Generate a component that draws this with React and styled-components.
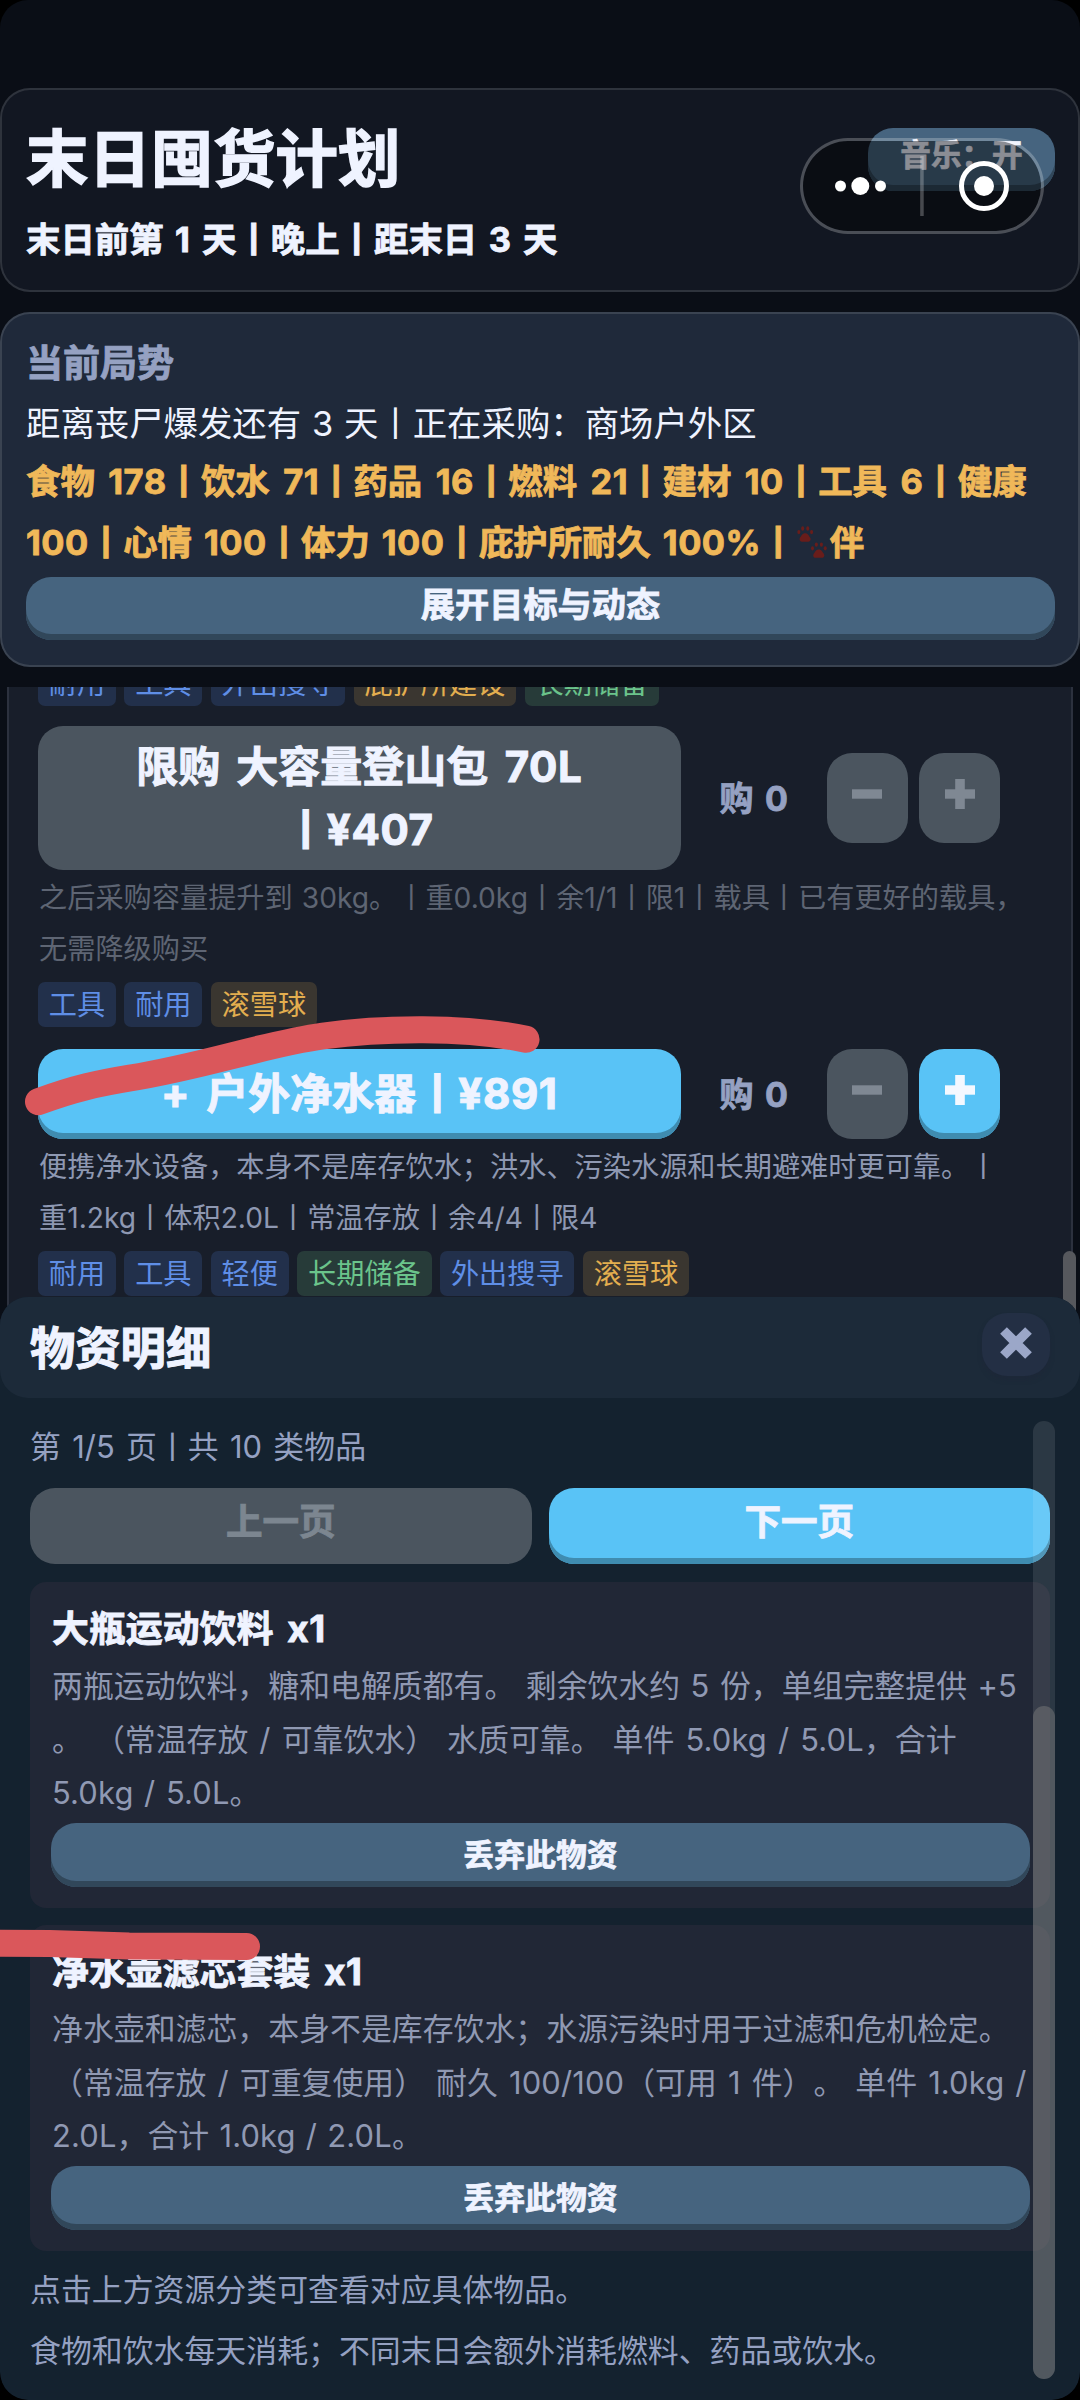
import React from 'react';
import styled, { createGlobalStyle, css } from 'styled-components';

const GlobalStyle = createGlobalStyle`
  html, body { margin: 0; padding: 0; background: #000; }
  * { box-sizing: border-box; }
  button { border: 0; margin: 0; padding: 0; font: inherit; word-spacing: inherit; }
`;

const ink = '#eff3ff';
const muted = '#95a1c2';

const heavy = css`
  font-weight: 700;
  -webkit-text-stroke: 0.024em currentColor;
  paint-order: stroke fill;
`;

const Screen = styled.main`
  position: relative;
  width: 1080px;
  height: 2400px;
  padding-top: 88px;
  display: flex;
  flex-direction: column;
  overflow: hidden;
  border-radius: 28px;
  background: #0a0e16;
  color: ${ink};
  font-family: Inter, 'Noto Sans CJK SC', sans-serif;
  text-spacing-trim: space-all;
  word-spacing: 0.07em;
  white-space: nowrap;
`;

const Panel = styled.section`
  flex: none;
  position: relative;
  border: 2px solid rgba(255, 255, 255, 0.12);
  border-radius: 30px;
  background: ${(p) => p.$bg};
  height: ${(p) => p.$h}px;
  padding: 0 24px;
`;

const HeaderPanel = styled(Panel)`
  display: flex;
  justify-content: space-between;
  align-items: flex-start;
`;

const StatusPanel = styled(Panel)`
  margin-top: 20px;
`;

const Heading = styled.div`
  padding-top: 35px;
`;

const GameTitle = styled.h1`
  margin: 0;
  font-size: 62.4px;
  line-height: 70px;
  ${heavy}
`;

const DayLine = styled.div`
  margin-top: 20px;
  font-size: 34.4px;
  line-height: 50px;
  word-spacing: 0.097em;
  ${heavy}
`;

const tones = {
  steel: css`background: #46647f; box-shadow: inset 0 -6px 0 #31475a;`,
  sky: css`background: #59c3f6; box-shadow: inset 0 -6px 0 #3f8cb0;`,
  off: css`background: #4b555f;`,
};

const Button = styled.button`
  display: flex;
  flex: none;
  flex-direction: column;
  align-items: center;
  justify-content: center;
  width: ${(p) => (p.$w ? `${p.$w}px` : '100%')};
  height: ${(p) => p.$h}px;
  padding-bottom: ${(p) => p.$lift ?? 6}px;
  border-radius: 25px;
  font-size: ${(p) => p.$size ?? 34.4}px;
  line-height: 50px;
  color: ${(p) => (p.$faded ? '#7c8690' : ink)};
  ${heavy}
  ${(p) => tones[p.$tone]}
`;

const GoodsButton = styled(Button)`
  font-size: 42px;
  line-height: 63.5px;
  word-spacing: 0.15em;
`;

const MusicButton = styled(Button)`
  margin-top: 38px;
  margin-right: -1px;
`;

const Capsule = styled.div`
  position: absolute;
  left: 798px;
  top: 48px;
  width: 244px;
  height: 96px;
  border: 3px solid rgba(255, 255, 255, 0.24);
  border-radius: 48px;
  background: rgba(0, 0, 0, 0.42);
  background-clip: padding-box;
  svg { display: block; }
`;

const StatusLabel = styled.h2`
  margin: 25px 0 0;
  font-size: 37px;
  line-height: 50px;
  color: ${muted};
  ${heavy}
`;

const StatusText = styled.div`
  margin-top: 6px;
  font-size: 34.4px;
  line-height: 58px;
`;

const Resources = styled.div`
  margin: -2px 0 4px;
  font-size: 34.4px;
  line-height: 61px;
  color: #f0b859;
  ${heavy}
`;

const Line = styled.div`
  word-spacing: ${(p) => (p.$ws ? `${p.$ws}em` : 'inherit')};
`;

const Latin = styled.span`
  letter-spacing: ${(p) => p.$ls}em;
`;

const Paw = styled.svg`
  display: inline-block;
  width: 34.4px;
  height: 34.4px;
  vertical-align: -5px;
`;

const Shop = styled.section`
  flex: none;
  position: relative;
  height: 640px;
  margin: 20px 7px 0;
  padding-left: 29px;
  overflow: hidden;
  border: solid #2c313e;
  border-width: 0 2px;
  background: #181e2a;
`;

const Tags = styled.div`
  display: flex;
  gap: 8.7px;
`;

const TopTags = styled(Tags)`
  margin-top: -26px;
`;

const tagTones = {
  blue: css`background: #22304b; color: #5f8ee6;`,
  amber: css`background: #3a3630; color: #e3ae4f;`,
  green: css`background: #273b39; color: #6bc48b;`,
};

const Tag = styled.span`
  height: 45px;
  padding: 0 10.7px;
  border-radius: 7px;
  font-size: 28.2px;
  line-height: 46px;
  ${(p) => tagTones[p.$tone]}
`;

const GoodsRow = styled.div`
  display: flex;
  align-items: center;
  margin-top: ${(p) => p.$mt}px;
`;

const Quantity = styled.div`
  width: 146px;
  padding: 1px 0 0 39px;
  font-size: 34px;
  line-height: 50px;
  word-spacing: 0.1em;
  color: ${muted};
  ${heavy}
`;

const Steppers = styled.div`
  display: flex;
  gap: 11.5px;
`;

const GoodsInfo = styled.div`
  margin: 3px 0 8px;
  padding-left: 1px;
  font-size: 28.2px;
  line-height: 50.5px;
  color: ${(p) => (p.$dim ? '#5e6573' : '#8e98b2')};
`;

const ShopScroll = styled.div`
  position: absolute;
  left: 1063px;
  top: 1251px;
  width: 13px;
  height: 90px;
  border-radius: 7px;
  background: #56585d;
`;

const Sheet = styled.section`
  flex: none;
  position: relative;
  margin-top: -30px;
  height: 1103px;
  border-radius: 28px;
  background: #14222f;
`;

const SheetHeader = styled.header`
  display: flex;
  align-items: center;
  justify-content: space-between;
  height: 101px;
  padding: 0 30px;
  border-radius: 28px;
  background: #1c2a39;
`;

const SheetTitle = styled.h2`
  margin: 0;
  padding-top: 2px;
  font-size: 45.3px;
  line-height: 60px;
  ${heavy}
`;

const CloseButton = styled.button`
  display: flex;
  align-items: center;
  justify-content: center;
  width: 68px;
  height: 63px;
  margin-top: -7px;
  padding-bottom: 3px;
  border-radius: 25px;
  background: #232f44;
  box-shadow: 0 4px 4px rgba(30, 38, 56, 0.5);
`;

const SheetBody = styled.div`
  padding: 0 30px;
  font-size: 30.9px;
  color: ${muted};
`;

const PageInfo = styled.div`
  margin-top: 24px;
  line-height: 50px;
  word-spacing: 0.085em;
`;

const Pager = styled.div`
  display: flex;
  gap: 17px;
  margin-top: 16px;
`;

const PageButton = styled(Button)`
  flex: 1;
`;

const SupplyCard = styled.article`
  height: 326px;
  margin-top: ${(p) => p.$mt}px;
  padding: 22px 20px 0 21px;
  border-radius: 16px;
  background: #212736;
`;

const SupplyTitle = styled.h3`
  margin: 0 0 5px;
  padding-left: 1px;
  font-size: 36.9px;
  line-height: 50px;
  word-spacing: 0.14em;
  color: ${ink};
  ${heavy}
`;

const SupplyText = styled.div`
  height: 164px;
  padding-left: 1px;
  line-height: 53.6px;
  color: #9099b3;
`;

const Footnotes = styled.div`
  margin-top: 8px;
  line-height: 61px;
`;

const ScrollTrack = styled.div`
  position: absolute;
  left: 1033px;
  top: 124px;
  width: 22px;
  height: 958px;
  padding-top: 285px;
  border-radius: 11px;
  background: rgba(255, 255, 255, 0.1);
`;

const ScrollThumb = styled.div`
  height: 673px;
  border-radius: 11px;
  background: rgba(128, 128, 128, 0.45);
`;

const Marker = styled.svg`
  position: absolute;
  left: 0;
  top: 0;
  pointer-events: none;
`;

const Mixed = ({ text, ls }) =>
  text.split(/([0-9A-Za-z.%/+¥]+)/).map((part, i) =>
    i % 2 ? <Latin key={i} $ls={ls}>{part}</Latin> : part
  );

const Sign = ({ plus, color }) => (
  <svg width="30" height="30" viewBox="0 0 30 30" fill={color}>
    <rect x="0" y="10.3" width="30" height="9.4" />
    {plus && <rect x="10.2" y="0" width="9.6" height="30" />}
  </svg>
);

const PawPrints = () => (
  <Paw viewBox="0 0 34 34" fill="#681d1b">
    {[[2, 0], [15.5, 16]].map(([x, y]) => (
      <g key={x} transform={`translate(${x} ${y})`}>
        <ellipse cx="1.8" cy="6" rx="1.5" ry="2.1" />
        <ellipse cx="5.6" cy="2.4" rx="1.5" ry="2.2" />
        <ellipse cx="10.6" cy="2.4" rx="1.5" ry="2.2" />
        <ellipse cx="14.4" cy="6" rx="1.5" ry="2.1" />
        <path d="M8 7.2c-2.800 0-3.500 2.300-4.800 4-1.400 2-.4 4.300 1.600 4.300h6.400c2 0 3-2.300 1.600-4.300-1.300-1.700-2-4-4.800-4z" />
      </g>
    ))}
  </Paw>
);

const TagList = ({ items, as: Wrap = Tags }) => (
  <Wrap>
    {items.map(([label, tone]) => (
      <Tag key={label} $tone={tone}>{label}</Tag>
    ))}
  </Wrap>
);

const Goods = ({ mt, height, label, soldOut, info, tags }) => (
  <>
    <GoodsRow $mt={mt}>
      <GoodsButton $w={642.5} $h={height} $lift={soldOut ? 0 : 1} $tone={soldOut ? 'off' : 'sky'}>
        {label.map((t) => <span key={t}><Mixed text={t} ls={0.015} /></span>)}
      </GoodsButton>
      <Quantity>购 0</Quantity>
      <Steppers>
        <Button $w={81} $h={90} $lift={8} $tone="off"><Sign color="#7f8893" /></Button>
        <Button $w={81} $h={90} $lift={8} $tone={soldOut ? 'off' : 'sky'}>
          <Sign plus color={soldOut ? '#7f8893' : '#f4f8ff'} />
        </Button>
      </Steppers>
    </GoodsRow>
    <GoodsInfo $dim={soldOut}>
      {info.map((t) => <Line key={t}>{t}</Line>)}
    </GoodsInfo>
    <TagList items={tags} />
  </>
);

const Supply = ({ mt, title, lines }) => (
  <SupplyCard $mt={mt}>
    <SupplyTitle><Mixed text={title} ls={0.015} /></SupplyTitle>
    <SupplyText>
      {lines.map(([t, ws]) => <Line key={t} $ws={ws}><Mixed text={t} ls={0.005} /></Line>)}
    </SupplyText>
    <Button $h={64} $size={30.9} $lift={1} $tone="steel">丢弃此物资</Button>
  </SupplyCard>
);

export default function App() {
  return (
    <>
      <GlobalStyle />
      <Screen>
        <HeaderPanel $bg="#121722" $h={204}>
          <Heading>
            <GameTitle>末日囤货计划</GameTitle>
            <DayLine><Mixed text="末日前第 1 天丨晚上丨距末日 3 天" ls={0.02} /></DayLine>
          </Heading>
          <MusicButton $w={187} $h={63} $size={30.6} $lift={9} $tone="steel">音乐：开</MusicButton>
          <Capsule>
            <svg width="238" height="90" viewBox="0 0 238 90">
              <g fill="#fff">
                <circle cx="37.500" cy="45" r="5.500" />
                <circle cx="57.300" cy="45" r="9" />
                <circle cx="77.500" cy="45" r="5.500" />
                <circle cx="181" cy="45" r="10" />
              </g>
              <rect x="117.200" y="15" width="3.500" height="60" fill="#fff" opacity="0.25" />
              <circle cx="181" cy="45" r="22.500" fill="none" stroke="#fff" strokeWidth="5" />
            </svg>
          </Capsule>
        </HeaderPanel>

        <StatusPanel $bg="#1f293a" $h={355}>
          <StatusLabel>当前局势</StatusLabel>
          <StatusText>距离丧尸爆发还有 3 天丨正在采购：商场户外区</StatusText>
          <Resources>
            <Line $ws={0.155}>
              <Mixed text="食物 178丨饮水 71丨药品 16丨燃料 21丨建材 10丨工具 6丨健康" ls={0.015} />
            </Line>
            <Line $ws={0.11}>
              <Mixed text="100丨心情 100丨体力 100丨庇护所耐久 100%丨" ls={0.015} />
              <PawPrints />伴
            </Line>
          </Resources>
          <Button $w={1029} $h={63} $size={34.2} $lift={8} $tone="steel">展开目标与动态</Button>
        </StatusPanel>

        <Shop>
          <TagList
            as={TopTags}
            items={[['耐用', 'blue'], ['工具', 'blue'], ['外出搜寻', 'blue'], ['庇护所建设', 'amber'], ['长期储备', 'green']]}
          />
          <Goods
            mt={20}
            height={144}
            soldOut
            label={['限购 大容量登山包 70L', '丨¥407']}
            info={['之后采购容量提升到 30kg。丨重0.0kg丨余1/1丨限1丨载具丨已有更好的载具，', '无需降级购买']}
            tags={[['工具', 'blue'], ['耐用', 'blue'], ['滚雪球', 'amber']]}
          />
          <Goods
            mt={22}
            height={90}
            label={['+ 户外净水器丨¥891']}
            info={['便携净水设备，本身不是库存饮水；洪水、污染水源和长期避难时更可靠。丨', '重1.2kg丨体积2.0L丨常温存放丨余4/4丨限4']}
            tags={[['耐用', 'blue'], ['工具', 'blue'], ['轻便', 'blue'], ['长期储备', 'green'], ['外出搜寻', 'blue'], ['滚雪球', 'amber']]}
          />
        </Shop>
        <ShopScroll />

        <Sheet>
          <SheetHeader>
            <SheetTitle>物资明细</SheetTitle>
            <CloseButton>
              <svg width="34" height="34" viewBox="0 0 34 34" stroke="#9ba7c8" strokeWidth="9.500">
                <path d="M4.500 4.500L29.500 29.500M29.500 4.500L4.500 29.500" />
              </svg>
            </CloseButton>
          </SheetHeader>
          <SheetBody>
            <PageInfo>第 1/5 页丨共 10 类物品</PageInfo>
            <Pager>
              <PageButton $h={76} $size={36.6} $lift={9} $tone="off" $faded>上一页</PageButton>
              <PageButton $h={76} $size={36.6} $lift={9} $tone="sky">下一页</PageButton>
            </Pager>
            <Supply
              mt={18}
              title="大瓶运动饮料 x1"
              lines={[
                ['两瓶运动饮料，糖和电解质都有。 剩余饮水约 5 份，单组完整提供 +5', 0.055],
                ['。 （常温存放 / 可靠饮水） 水质可靠。 单件 5.0kg / 5.0L，合计', 0.075],
                ['5.0kg / 5.0L。', 0.06],
              ]}
            />
            <Supply
              mt={17}
              title="净水壶滤芯套装 x1"
              lines={[
                ['净水壶和滤芯，本身不是库存饮水；水源污染时用于过滤和危机检定。', 0],
                ['（常温存放 / 可重复使用） 耐久 100/100（可用 1 件）。 单件 1.0kg /', 0.075],
                ['2.0L，合计 1.0kg / 2.0L。', 0.05],
              ]}
            />
            <Footnotes>
              <Line>点击上方资源分类可查看对应具体物品。</Line>
              <Line>食物和饮水每天消耗；不同末日会额外消耗燃料、药品或饮水。</Line>
            </Footnotes>
          </SheetBody>
          <ScrollTrack><ScrollThumb /></ScrollTrack>
        </Sheet>

        <Marker width="1080" height="2400" fill="none" stroke="#da575b" strokeWidth="27" strokeLinecap="round">
          <path d="M38.500 1101.700C75 1088 100 1083 130 1078C205 1066 265 1044 323 1036C380 1028 465 1026 526 1039.300" />
          <path d="M-20 1943L50 1943.500L129 1946L246.500 1946.500" />
        </Marker>
      </Screen>
    </>
  );
}
